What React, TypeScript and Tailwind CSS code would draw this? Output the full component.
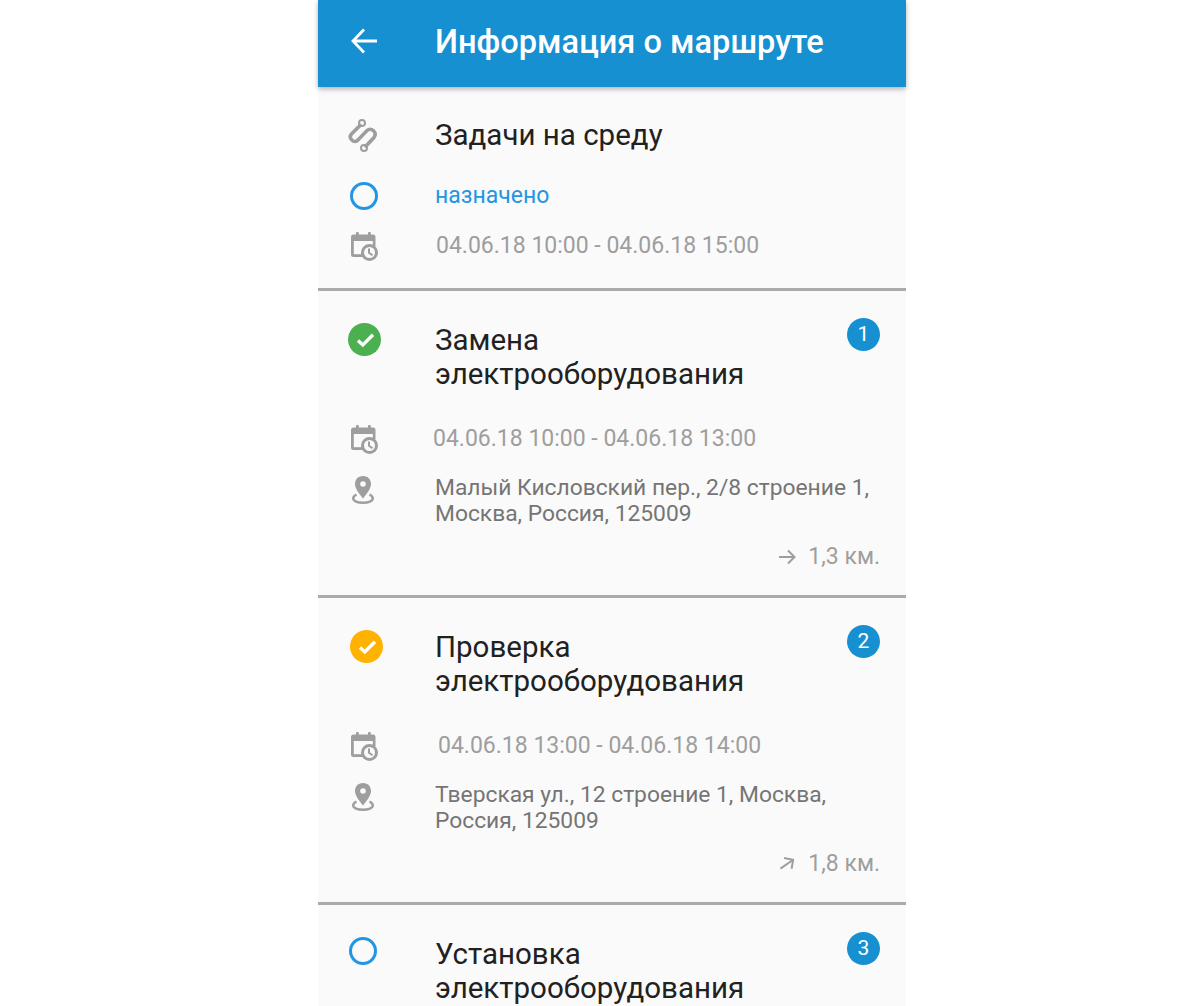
import React from "react";

function RouteIcon() {
  return (
    <svg width="32" height="33" viewBox="0 0 32 33" fill="none" stroke="#9e9e9e">
      <circle cx="14" cy="4" r="3" strokeWidth="2" />
      <circle cx="16" cy="29" r="3" strokeWidth="2" />
      <path
        d="M12 6.5 L3.5 15 C0 19 5.5 24.5 9.5 21.5 L19 11.5 C23.5 8 29.5 13.5 26 18.5 L18 27"
        strokeWidth="3.6"
        strokeLinecap="round"
      />
    </svg>
  );
}

function CalendarIcon() {
  return (
    <svg width="27" height="29" viewBox="0 0 27 29">
      <rect x="5" y="0" width="2.8" height="5" rx="1" fill="#9e9e9e" />
      <rect x="17" y="0" width="2.8" height="5" rx="1" fill="#9e9e9e" />
      <path
        d="M2.5 2.5 H22 A2.5 2.5 0 0 1 24.5 5 V14 H13 V25 H2.5 A2.5 2.5 0 0 1 0 22.5 V5 A2.5 2.5 0 0 1 2.5 2.5 Z"
        fill="#9e9e9e"
      />
      <rect x="2.8" y="9" width="19" height="13.2" fill="#fafafa" />
      <circle cx="18.5" cy="20.5" r="7" fill="#fafafa" stroke="#9e9e9e" strokeWidth="3" />
      <path d="M18 16.5 V20.8 L21.5 23.3" fill="none" stroke="#9e9e9e" strokeWidth="2" />
    </svg>
  );
}

function PinIcon() {
  return (
    <svg width="22" height="28" viewBox="0 0 22 28">
      <path
        d="M4.5 18.5 C2.5 19.5 1.2 21 1.2 22.5 C1.2 25 5.5 26.8 11 26.8 C16.5 26.8 20.8 25 20.8 22.5 C20.8 21 19.5 19.5 17.5 18.5"
        fill="none"
        stroke="#9e9e9e"
        strokeWidth="2.4"
      />
      <path
        d="M11 0 C6 0 3 3.6 3 8 C3 13 8 18.5 11 22.5 C14 18.5 19 13 19 8 C19 3.6 16 0 11 0 Z"
        fill="#9e9e9e"
      />
      <circle cx="11" cy="8" r="2.8" fill="#fafafa" />
    </svg>
  );
}

function CheckCircle({ color }: { color: string }) {
  return (
    <svg width="33" height="33" viewBox="0 0 33 33">
      <circle cx="16.5" cy="16.5" r="16.5" fill={color} />
      <path d="M10 17.5 L14.8 22 L25 11.8" fill="none" stroke="#fff" strokeWidth="3.4" />
    </svg>
  );
}

function OpenCircle() {
  return <div className="h-[28px] w-[28px] rounded-full border-[3px] border-[#2196e3]" />;
}

function Section({ status, statusClass, title, date, dateOffset, address, dist, num, diag }: any) {
  return (
    <section className="border-b-[3px] border-[#ababab] pr-[26px] pt-[32px] pb-[21px]">
      <div className="flex">
        <div className={`flex w-[117px] justify-center ${statusClass}`}>{status}</div>
        <h2 className="flex-1 text-[29.5px] leading-[34px] text-[#212121]">
          {title}
          <br />
          электрооборудования
        </h2>
        <span className="-mt-[5px] flex h-[33px] w-[33px] items-center justify-center rounded-full bg-[#1690d0] text-[21px] text-white">
          {num}
        </span>
      </div>
      <div className="mt-[31px] flex items-center">
        <div className="flex w-[117px] justify-center pr-[25px]">
          <CalendarIcon />
        </div>
        <span className={`text-[23px] leading-[34px] text-[#9e9e9e] ${dateOffset}`}>{date}</span>
      </div>
      <div className="mt-[19px] flex">
        <div className="flex w-[117px] justify-center pr-[27px] pt-[1px]">
          <PinIcon />
        </div>
        <p className="flex-1 text-[22.8px] leading-[26px] text-[#757575]">{address}</p>
      </div>
      <div className="mt-[13px] flex items-center justify-end gap-[12px] text-[23px] leading-[34px] text-[#9e9e9e]">
        <svg
          width="18"
          height="18"
          viewBox="0 0 18 18"
          fill="none"
          stroke="#9e9e9e"
          strokeWidth="2"
          className={diag ? "-rotate-[35deg]" : ""}
        >
          <path d="M1 9 H16.5 M10 2.5 L16.5 9 L10 15.5" />
        </svg>
        {dist}
      </div>
    </section>
  );
}

export default function App() {
  return (
    <div className="h-[1006px] overflow-hidden bg-white pl-[318px] font-['Roboto',sans-serif]">
      <div className="w-[588px] bg-[#fafafa]">
        <header className="relative flex h-[87px] items-center bg-[#1690d0] pb-[2px] shadow-[0_2px_5px_rgba(0,0,0,0.3)]">
          <div className="flex w-[117px] justify-center pb-[3px] pr-[25px]">
            <svg width="26" height="26" viewBox="0 0 26 26" fill="none" stroke="#fff" strokeWidth="2.8">
              <path d="M26 13 H2 M13 1.5 L2 13 L13 24.5" />
            </svg>
          </div>
          <h1 className="text-[32.6px] font-medium text-white">Информация о маршруте</h1>
        </header>

        <section className="border-b-[3px] border-[#ababab] pt-[28px]">
          <div className="flex items-center">
            <div className="flex w-[117px] justify-center pr-[25px]">
              <RouteIcon />
            </div>
            <span className="text-[29.5px] leading-[40px] text-[#212121]">Задачи на среду</span>
          </div>
          <div className="mt-[24px] flex items-center">
            <div className="flex w-[117px] justify-center pr-[25px]">
              <OpenCircle />
            </div>
            <span className="text-[23px] leading-[34px] text-[#2196e3]">назначено</span>
          </div>
          <div className="mt-[16px] flex items-center pb-[25px]">
            <div className="flex w-[117px] justify-center pr-[25px]">
              <CalendarIcon />
            </div>
            <span className="ml-[1px] text-[23px] leading-[34px] text-[#9e9e9e]">
              04.06.18 10:00 - 04.06.18 15:00
            </span>
          </div>
        </section>

        <Section
          status={<CheckCircle color="#4caf50" />}
          statusClass="pr-[25px]"
          title="Замена"
          date="04.06.18 10:00 - 04.06.18 13:00"
          dateOffset="-ml-[2px]"
          address={
            <>
              Малый Кисловский пер., 2/8 строение 1,
              <br />
              Москва, Россия, 125009
            </>
          }
          dist="1,3 км."
          num="1"
        />
        <Section
          status={<CheckCircle color="#ffb300" />}
          statusClass="pr-[21px]"
          title="Проверка"
          date="04.06.18 13:00 - 04.06.18 14:00"
          dateOffset="ml-[3px]"
          address={
            <>
              Тверская ул., 12 строение 1, Москва,
              <br />
              Россия, 125009
            </>
          }
          dist="1,8 км."
          num="2"
          diag
        />
        <Section
          status={<OpenCircle />}
          statusClass="pr-[27px]"
          title="Установка"
          date="04.06.18 14:00 - 04.06.18 15:00"
          dateOffset=""
          address=""
          dist=""
          num="3"
        />
      </div>
    </div>
  );
}
